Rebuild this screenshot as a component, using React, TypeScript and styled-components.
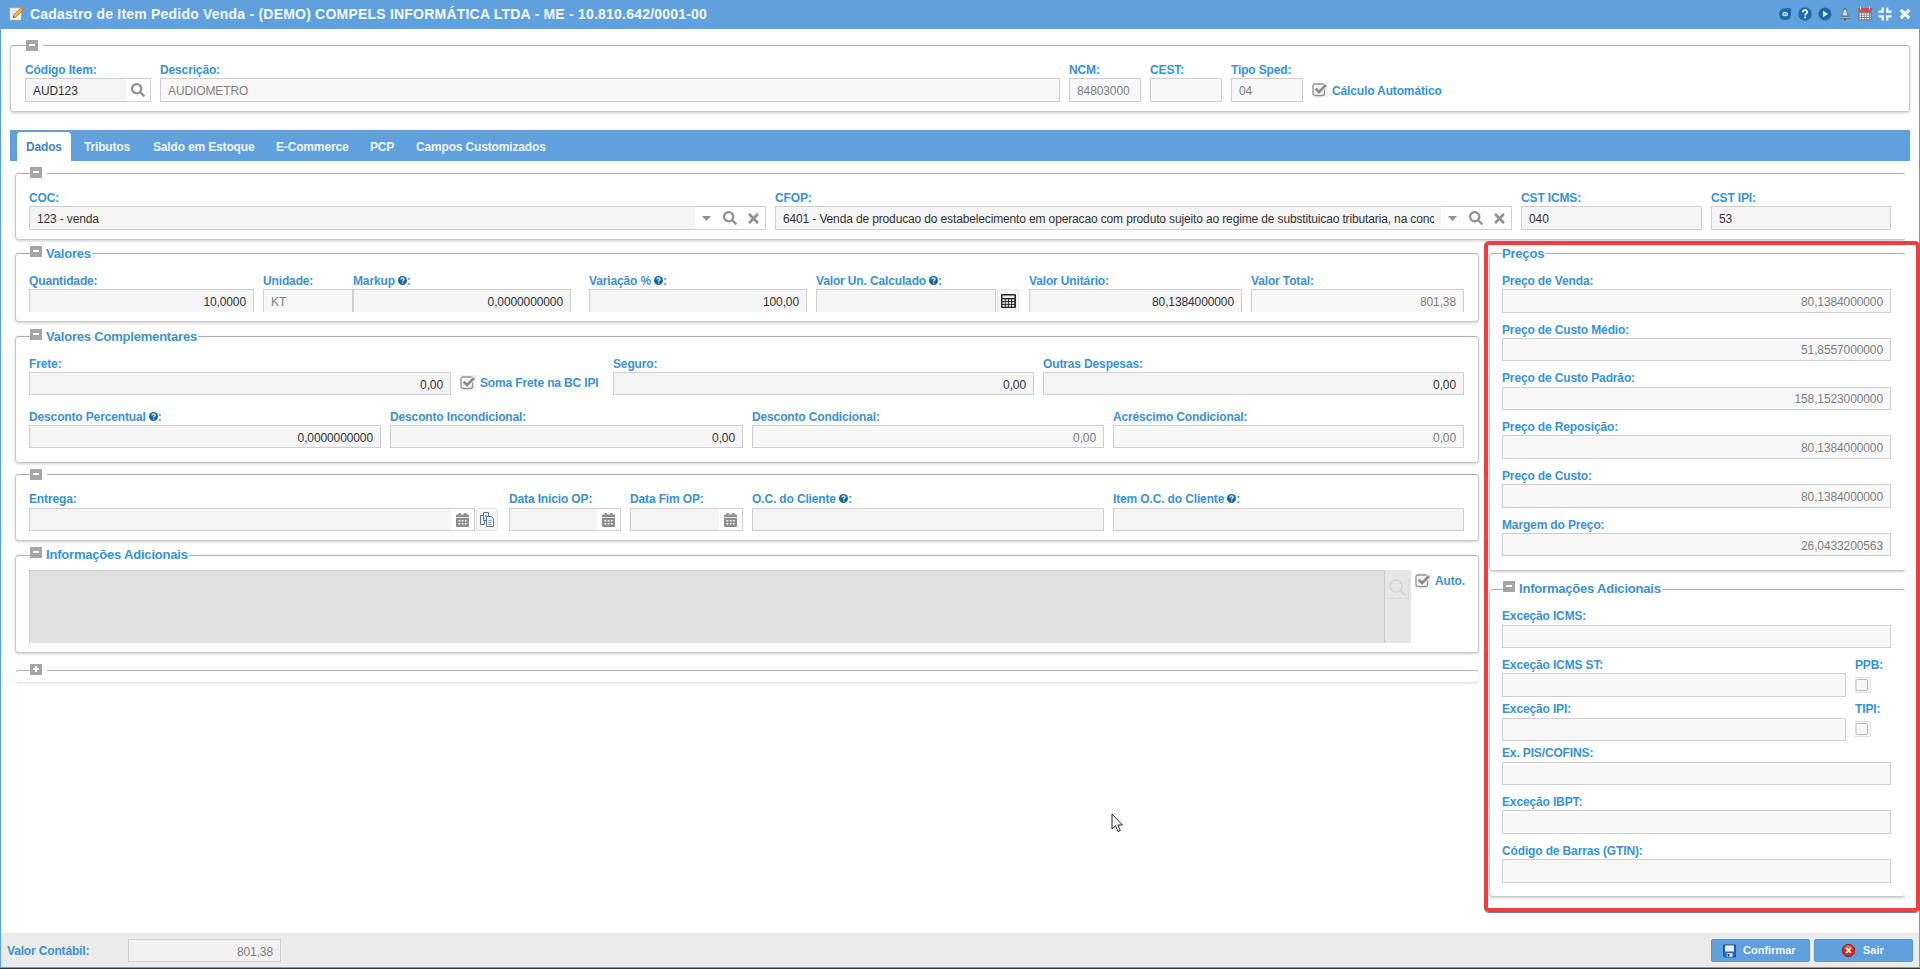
import React from "react";
import styled, { createGlobalStyle, css } from "styled-components";
import { FaSearch, FaTimes } from "react-icons/fa";

const blue = "#60a0dc";
const labelBlue = "#3892d4";

const Global = createGlobalStyle`
  * { box-sizing: border-box; }
  body {
    margin: 0;
    background: #fff;
    overflow: hidden;
    font: 12px/14px "Liberation Sans", Arial, sans-serif;
  }
  svg { display: block; flex: none; }
`;

const Window = styled.div`
  position: relative;
  display: flex;
  flex-direction: column;
  width: 1920px;
  height: 969px;
  border-bottom: 1px solid #2b3640;
`;

const Header = styled.header`
  display: flex;
  align-items: center;
  flex: none;
  height: 29px;
  padding: 0 7px 2px 9px;
  background: ${blue};
  color: #f4f8fc;
`;

const Title = styled.h1`
  flex: 1;
  margin: 0 0 0 6px;
  font-size: 14px;
  line-height: 16px;
  font-weight: bold;
  letter-spacing: 0.21px;
  white-space: nowrap;
`;

const Tools = styled.div`
  display: flex;
  align-items: center;
  gap: 4px;
`;

const Body = styled.main`
  flex: 1;
  min-height: 0;
  padding: 16px 9px 0;
  border: solid ${blue};
  border-width: 0 1px;
`;

type BoxProps = { $h: number; $mt?: number; $pt: number; $clip?: boolean; $pl?: number; $faded?: boolean };
const Box = styled.section<BoxProps>`
  position: relative;
  height: ${(p) => p.$h}px;
  margin-top: ${(p) => p.$mt ?? 0}px;
  padding: ${(p) => p.$pt}px 0 0 ${(p) => p.$pl ?? 13}px;
  border: 1px solid #c9c9c9;
  border-top-color: #b0b0b0;
  border-radius: 4px;
  box-shadow: 0 1px 3px rgba(0, 0, 0, 0.2);
  ${(p) =>
    p.$clip &&
    css`
      border-right-color: transparent;
      clip-path: inset(-12px 1px -6px -4px);
    `}
  ${(p) =>
    p.$faded &&
    css`
      border-color: #b0b0b0 transparent #e3e3e3;
      box-shadow: 0 1px 3px rgba(0, 0, 0, 0.1);
    `}
`;

const Legend = styled.div<{ $y: number; $x?: number }>`
  position: absolute;
  left: ${(p) => p.$x ?? 14}px;
  top: ${(p) => p.$y}px;
  display: flex;
  padding-right: 1px;
  background: #fff;
`;

const LegendText = styled.span<{ $bare?: boolean; $drop?: number }>`
  margin: ${(p) => p.$drop ?? 0}px 0 0 ${(p) => (p.$bare ? 0 : 4)}px;
  color: ${labelBlue};
  font-size: 13px;
  line-height: 15px;
  font-weight: bold;
  letter-spacing: -0.2px;
  white-space: nowrap;
`;

const ToggleBox = styled.span`
  display: block;
  width: 12px;
  height: 11px;
  background: #a6a6a6;
`;

const Row = styled.div<{ $mt?: number }>`
  display: flex;
  align-items: flex-start;
  margin-top: ${(p) => p.$mt ?? 0}px;
`;

const FieldSpacer = styled.span`
  flex: 1;
`;

const RowEnd = styled.span`
  flex: none;
  width: 14px;
`;

const FieldWrap = styled.div<{ $w: number; $ml: number }>`
  flex: none;
  width: ${(p) => p.$w}px;
  margin-left: ${(p) => p.$ml}px;
`;

const Label = styled.label<{ $gap?: number }>`
  display: flex;
  height: 14px;
  margin-bottom: ${(p) => p.$gap ?? 1}px;
  color: ${labelBlue};
  font-weight: bold;
  letter-spacing: -0.14px;
  white-space: nowrap;
`;

const Control = styled.div<{ $h: number; $disabled?: boolean; $cut?: boolean }>`
  display: flex;
  height: ${(p) => p.$h}px;
  background: ${(p) => (p.$disabled ? "#f8f8f8" : "#f5f5f5")};
  color: ${(p) => (p.$disabled ? "#7f7f7f" : "#333")};
  border: 1px solid #cfcfcf;
  ${(p) => p.$cut && "border-bottom: 0;"}
`;

const Value = styled.div<{ $right?: boolean; $up?: boolean; $tight?: boolean }>`
  flex: 1;
  min-width: 0;
  margin: ${(p) => (p.$up ? 4 : 5)}px 7px 0;
  height: 15px;
  overflow: hidden;
  letter-spacing: ${(p) => (p.$tight ? -0.14 : -0.11)}px;
  white-space: nowrap;
  text-align: ${(p) => (p.$right ? "right" : "left")};
`;

const Triggers = styled.div`
  display: flex;
  align-items: center;
  background: #fff;
  color: #929292;
`;

const Trigger = styled.span<{ $w?: number }>`
  display: flex;
  justify-content: center;
  width: ${(p) => p.$w ?? 24}px;
`;

const CheckRow = styled.div<{ $mt: number; $ml: number }>`
  display: flex;
  flex: none;
  margin: ${(p) => p.$mt}px 0 0 ${(p) => p.$ml}px;
`;

const CheckFrame = styled.span`
  display: block;
  width: 16px;
  height: 16px;
  background: #f3f3f3;
`;

const CheckLabel = styled.span<{ $drop?: number }>`
  margin: ${(p) => p.$drop ?? 1}px 0 0 4px;
  color: ${labelBlue};
  font-weight: bold;
  letter-spacing: -0.14px;
  white-space: nowrap;
`;

const TabBar = styled.nav`
  display: flex;
  align-items: flex-end;
  height: 31px;
  margin-top: 18px;
  padding-left: 7px;
  background: ${blue};
`;

const Tab = styled.span<{ $w: number; $active?: boolean }>`
  width: ${(p) => p.$w}px;
  height: 29px;
  margin-right: 4px;
  padding: 8px 0 0 9px;
  border-radius: 4px 4px 0 0;
  background: ${(p) => (p.$active ? "#fff" : "transparent")};
  color: ${(p) => (p.$active ? "#4584bd" : "#f0f6fc")};
  font-weight: bold;
  letter-spacing: -0.16px;
  white-space: nowrap;
`;

const Pane = styled.div`
  padding: 12px 4px 0 5px;
`;

const Columns = styled.div`
  display: flex;
  margin-top: 13px;
`;

const Left = styled.div`
  width: 1464px;
`;

const Right = styled.div`
  width: 417px;
  margin-left: 10px;
`;

const SideButton = styled.span<{ $cut?: boolean }>`
  display: flex;
  align-items: center;
  justify-content: center;
  width: 22px;
  height: 23px;
  margin: ${(p) => (p.$cut ? 15 : 16)}px 0 0 1px;
  background: #f7f7f7;
  border: 1px solid #e4e4e4;
  border-radius: 3px;
  ${(p) => p.$cut && "border-bottom: 0; border-radius: 3px 3px 0 0;"}
`;

const Notes = styled.div`
  width: 1356px;
  height: 73px;
  background: #e1e1e1;
  border: 1px solid #cbcbcb;
  border-bottom: 0;
`;

const NotesSide = styled.div`
  width: 26px;
  height: 73px;
  padding: 8px 0 0 3px;
  background: #e6e6e6;
`;

const NotesButton = styled.div`
  width: 21px;
  height: 21px;
  border: solid #dadada;
  border-width: 0 1px 1px 0;
`;

const Highlight = styled.div`
  position: absolute;
  left: 1484px;
  top: 241px;
  width: 436px;
  height: 671px;
  border: 4px solid #f23b3d;
  border-radius: 5px;
  box-shadow: 0 1px 1px rgba(60, 60, 60, 0.7);
`;

const Pointer = styled.svg`
  position: absolute;
  left: 1111px;
  top: 813px;
`;

const Footer = styled.footer`
  display: flex;
  flex: none;
  height: 35px;
  padding: 6px 6px 0;
  background: #ebebeb;
  border: 1px solid ${blue};
  border-top: 0;
`;

const FooterLabel = styled.span`
  width: 121px;
  margin-top: 5px;
  color: ${labelBlue};
  font-weight: bold;
  letter-spacing: -0.16px;
`;

const FooterValue = styled(Control)`
  width: 153px;
  margin-right: auto;
  background: #f1f1f1;
`;

const Button = styled.button<{ $pl: number; $gap: number }>`
  display: flex;
  align-items: center;
  width: 99px;
  height: 23px;
  margin-left: 4px;
  padding: 0 0 0 ${(p) => p.$pl}px;
  gap: ${(p) => p.$gap}px;
  background: ${blue};
  border: 1px solid #5596d2;
  border-radius: 2px;
  color: #f2f7fc;
  font: bold 11px/13px "Liberation Sans", Arial, sans-serif;
`;

const Toggle = ({ plus }: { plus?: boolean }) => (
  <ToggleBox>
    <svg width="12" height="11" viewBox="0 0 12 11">
      <rect x="3" y="4" width="6" height="2" fill="#fff" />
      {plus && <rect x="5" y="2" width="2" height="6" fill="#fff" />}
    </svg>
  </ToggleBox>
);

const HelpIcon = styled.svg`
  margin-left: 3px;
`;

const HelpDot = () => (
  <HelpIcon width="9" height="14" viewBox="0 0 9 14">
    <circle cx="4.5" cy="6.5" r="4.5" fill="#16659f" />
    <path d="M3 5.400C3 3.400 6.200 3.500 6.100 5.300C6 6.300 4.600 6.300 4.600 7.500M4.600 8.500v1.100" fill="none" stroke="#e8f3fb" strokeWidth="1.3" />
  </HelpIcon>
);

const CheckIcon = ({ on }: { on?: boolean }) => (
  <CheckFrame>
    <svg width="16" height="16" viewBox="0 0 16 16">
      {on ? (
        <>
          <rect x="1" y="2" width="11.5" height="11.5" rx="2" fill="#f8f8f8" stroke="#929292" strokeWidth="1.3" />
          <path d="M3.6 6.8L7 10.2L14 3" fill="none" stroke="#f8f8f8" strokeWidth="4.4" />
          <path d="M3.6 6.6L7 10L14 3" fill="none" stroke="#8c8c8c" strokeWidth="2.7" />
        </>
      ) : (
        <>
          <path d="M0 .5h15.5v15H0" fill="none" stroke="#e3e3e3" />
          <rect x="1" y="2.5" width="11.5" height="11" rx="1.5" fill="#f8f8f8" stroke="#bdbdbd" />
        </>
      )}
    </svg>
  </CheckFrame>
);

const Calendar = () => (
  <svg width="13" height="14" viewBox="0 0 13 14" fill="#8d8d8d">
    <path d="M2.5 0h2.3v1.5h3.400V0h2.300v1.500H12q1 0 1 1V4.300H0V2.500q0-1 1-1h1.500z" />
    <path fillRule="evenodd" d="M0 5h13v8q0 1-1 1H1q-1 0-1-1zM2.500 7v1.400h1.700V7zM5.700 7v1.400h1.700V7zM8.900 7v1.400h1.700V7zM2.500 10v1.500h1.700V10zM5.700 10v1.500h1.700V10zM8.900 10v1.500h1.700V10z" />
  </svg>
);

const GridCalc = () => (
  <svg width="15" height="14" viewBox="0 0 15 14">
    <rect x="0" y="0" width="15" height="14" rx="1" fill="#262626" />
    <rect x="1.5" y="1.5" width="12" height="2.5" fill="#e8e8e8" />
    <g fill="#f2f2f2">
      {[5.3, 8.1, 10.9].map((y) => [1.5, 4.7, 7.9, 11.1].map((x) => <rect key={x + "-" + y} x={x} y={y} width="2.2" height="1.8" />))}
    </g>
  </svg>
);

const PagesIcon = () => (
  <svg width="14" height="15" viewBox="0 0 14 15" fill="#e9f1f8" stroke="#5e788f" strokeWidth="1">
    <path d="M.5 3.5h4v9h-4z" />
    <path d="M3.5.5h5v8h-5z" />
    <path d="M6.5 4.5h5l2 2v8h-7z" />
    <path d="M5 3l2 2M5 5l2-2M8.5 8.5h3M8.5 10.5h3M8.5 12.5h3" stroke="#7fa8c9" />
  </svg>
);

const NoteIcon = () => (
  <svg width="15" height="15" viewBox="0 0 15 15">
    <rect x="1" y="2" width="11" height="12" fill="#f7f7f3" stroke="#c4c4bd" strokeWidth=".6" />
    <path d="M3 5h6M3 7.5h4M3 10h3" stroke="#c9cdd2" />
    <path d="M4 11.8L5 8.7L11.6 1.8L14 4L7.2 10.9z" fill="#f3b13c" stroke="#8a6a35" strokeWidth=".6" />
    <path d="M11.6 1.8l1-1L15 3l-1 1z" fill="#e37c6a" />
    <path d="M4 11.8l.5-1.5l1.2 1z" fill="#333" />
  </svg>
);

const ToolIcons = () => (
  <Tools>
    <svg width="16" height="16" viewBox="0 0 16 16">
      <path d="M4 3.400Q7 1.700 14 2.200V9Q13.600 14 8 14Q2.200 13.800 2.200 8.200Q2.200 5 4 3.400z" fill="#1b6aa8" />
      <rect x="5.300" y="6" width="5.600" height="4.200" rx="2" fill="#dcebf7" />
      <path d="M6.500 7.500h3.200M6.500 8.800h3.200" stroke="#1b6aa8" strokeWidth=".6" />
    </svg>
    <svg width="16" height="16" viewBox="0 0 16 16">
      <circle cx="8" cy="8" r="6.800" fill="#1b6eae" />
      <path d="M5.700 6.300C5.700 3.300 10.500 3.500 10.300 6.200C10.100 7.700 8.100 7.700 8.100 9.400M8.100 10.600v1.700" fill="none" stroke="#fff" strokeWidth="1.700" />
    </svg>
    <svg width="16" height="16" viewBox="0 0 16 16">
      <circle cx="8" cy="8" r="6.500" fill="#1b6aa8" />
      <path d="M6 4.800L11 8L6 11.200z" fill="#e6f1fa" />
    </svg>
    <svg width="16" height="16" viewBox="0 0 16 16">
      <path d="M6.500 2.500Q8 1 9.500 2.500L11.500 9.500L13.500 13h-11L4.500 9.500z" fill="#62758a" />
      <path d="M7 3.800h2L10.500 9.500h-5z" fill="#cfdbe6" />
      <rect x="3" y="11" width="10" height="1" fill="#9db2c6" />
      <rect x="7" y="13" width="2" height="1.400" fill="#425568" />
    </svg>
    <svg width="16" height="16" viewBox="0 0 16 16">
      <rect x="1" y="2" width="14" height="12.500" fill="#7b8188" />
      <rect x="1.500" y="2" width="13" height="3.800" fill="#cf4a4c" />
      <path d="M3.500 0.500v3M12.500 .5v3" stroke="#ddd" />
      <path d="M2.500 8h11M2.500 10.300h11M2.500 12.600h11" stroke="#f5f5f5" strokeWidth="1.400" strokeDasharray="1.700 .9" />
    </svg>
    <svg width="16" height="16" viewBox="0 0 16 16" fill="none" stroke="#f2f7fc" strokeWidth="2.200">
      <path d="M1.500 5.600h4.200V1.500M14.500 5.600h-4.200V1.500M1.500 10.400h4.200v4.100M14.500 10.400h-4.200v4.100" />
    </svg>
    <svg width="16" height="16" viewBox="0 0 16 16">
      <path d="M3.800 3.800l8.400 8.400M12.200 3.800l-8.400 8.400" stroke="#f2f7fc" strokeWidth="3.200" />
    </svg>
  </Tools>
);

const SaveIcon = () => (
  <svg width="13" height="14" viewBox="0 0 14 14">
    <path d="M.5.5h13v13H2L.5 12z" fill="#2a66c4" stroke="#1c4c9c" />
    <rect x="2.300" y="1" width="9.400" height="6.500" fill="#eef3f8" />
    <path d="M2.300 7.500h9.400" stroke="#9ab" />
    <rect x="4" y="9.300" width="6.200" height="4" fill="#dde5ee" />
    <rect x="5" y="10.300" width="1.800" height="2.500" fill="#222" />
  </svg>
);

const ExitIcon = () => (
  <svg width="13" height="13" viewBox="0 0 13 13">
    <path d="M4 .5h5L12.500 4v5L9 12.500H4L.5 9V4z" fill="#d42a1e" stroke="#8e1a14" strokeWidth=".8" />
    <path d="M2 4.500L4.500 1.500h4L11 4.500z" fill="#ef7d6b" opacity=".7" />
    <path d="M4.200 4.200l4.600 4.600M8.800 4.200L4.200 8.800" stroke="#fff" strokeWidth="1.800" />
  </svg>
);

type FieldProps = {
  label: string;
  w: number;
  ml?: number;
  h?: number;
  value?: string;
  right?: boolean;
  disabled?: boolean;
  cut?: boolean;
  help?: boolean;
  gap?: number;
  up?: boolean;
  trigger?: "search" | "date" | "combo";
};

const Field = ({ label, w, ml = 9, h = 23, value = "", right, disabled, cut, help, gap, up, trigger }: FieldProps) => (
  <FieldWrap $w={w} $ml={ml}>
    <Label $gap={gap}>
      {label}
      {help && <HelpDot />}:
    </Label>
    <Control $h={h} $disabled={disabled} $cut={cut}>
      <Value $right={right} $up={up} $tight={trigger === "combo"}>{value}</Value>
      {trigger && (
        <Triggers>
          {trigger === "combo" && (
            <>
              <Trigger $w={23}>
                <svg width="9" height="5" viewBox="0 0 9 5"><path d="M0 0h9L4.500 5z" fill="#929292" /></svg>
              </Trigger>
              <Trigger><FaSearch size={14} /></Trigger>
              <Trigger $w={23}><FaTimes size={15} /></Trigger>
            </>
          )}
          {trigger === "search" && <Trigger><FaSearch size={14} /></Trigger>}
          {trigger === "date" && <Trigger $w={23}><Calendar /></Trigger>}
        </Triggers>
      )}
    </Control>
  </FieldWrap>
);

const prices = [
  { label: "Preço de Venda", value: "80,1384000000", h: 24, mt: 0, gap: 1 },
  { label: "Preço de Custo Médio", value: "51,8557000000", h: 23, mt: 10, gap: 1, up: true },
  { label: "Preço de Custo Padrão", value: "158,1523000000", h: 23, mt: 10, gap: 2, up: true },
  { label: "Preço de Reposição", value: "80,1384000000", h: 24, mt: 10, gap: 1 },
  { label: "Preço de Custo", value: "80,1384000000", h: 24, mt: 10, gap: 1 },
  { label: "Margem do Preço", value: "26,0433200563", h: 23, mt: 10, gap: 1 },
];

const exceptions = [
  { label: "Exceção ICMS", h: 23, mt: 0, gap: 2 },
  { label: "Exceção ICMS ST", h: 24, mt: 10, gap: 1, flag: "PPB" },
  { label: "Exceção IPI", h: 23, mt: 5, gap: 2, flag: "TIPI" },
  { label: "Ex. PIS/COFINS", h: 23, mt: 5, gap: 2 },
  { label: "Exceção IBPT", h: 24, mt: 10, gap: 1 },
  { label: "Código de Barras (GTIN)", h: 24, mt: 10, gap: 1 },
];

export default function App() {
  return (
    <Window>
      <Global />
      <Header>
        <NoteIcon />
        <Title>Cadastro de Item Pedido Venda - (DEMO) COMPELS INFORMÁTICA LTDA - ME - 10.810.642/0001-00</Title>
        <ToolIcons />
      </Header>
      <Body>
        <Box $h={67} $pt={17} $pl={14}>
          <Legend $y={-6} $x={15}><Toggle /><LegendText> </LegendText></Legend>
          <Row>
            <Field ml={0} w={126} h={24} label="Código Item" value="AUD123" trigger="search" />
            <Field w={900} h={24} label="Descrição" value="AUDIOMETRO" disabled />
            <Field w={72} h={24} label="NCM" value="84803000" disabled />
            <Field w={72} h={24} label="CEST" disabled />
            <Field w={72} h={24} label="Tipo Sped" value="04" disabled />
            <CheckRow $mt={19} $ml={9}><CheckIcon on /><CheckLabel $drop={2}>Cálculo Automático</CheckLabel></CheckRow>
          </Row>
        </Box>
        <TabBar>
          <Tab $w={54} $active>Dados</Tab>
          <Tab $w={65}>Tributos</Tab>
          <Tab $w={119}>Saldo em Estoque</Tab>
          <Tab $w={90}>E-Commerce</Tab>
          <Tab $w={42}>PCP</Tab>
          <Tab $w={150}>Campos Customizados</Tab>
        </TabBar>
        <Pane>
          <Box $h={67} $pt={17} $clip>
            <Legend $y={-7}><Toggle /><LegendText> </LegendText></Legend>
            <Row>
              <Field ml={0} w={737} h={24} label="COC" value="123 - venda" trigger="combo" />
              <Field w={737} h={24} label="CFOP" value="6401 - Venda de producao do estabelecimento em operacao com produto sujeito ao regime de substituicao tributaria, na conc" trigger="combo" />
              <Field w={181} h={24} label="CST ICMS" value="040" />
              <Field w={180} h={24} label="CST IPI" value="53" />
            </Row>
          </Box>
          <Columns>
            <Left>
              <Box $h={69} $pt={20}>
                <Legend $y={-8}><Toggle /><LegendText>Valores</LegendText></Legend>
                <Row>
                  <Field ml={0} w={225} label="Quantidade" value="10,0000" right cut />
                  <Field w={90} label="Unidade" value="KT" disabled cut />
                  <Field ml={0} w={218} label="Markup" value="0,0000000000" right cut help />
                  <Field ml={18} w={218} label="Variação %" value="100,00" right cut help />
                  <Field w={180} label="Valor Un. Calculado" cut help />
                  <SideButton $cut><GridCalc /></SideButton>
                  <Field ml={10} w={213} label="Valor Unitário" value="80,1384000000" right cut />
                  <Field w={213} label="Valor Total" value="801,38" right disabled cut />
                </Row>
              </Box>
              <Box $h={127} $mt={14} $pt={20}>
                <Legend $y={-8}><Toggle /><LegendText>Valores Complementares</LegendText></Legend>
                <Row>
                  <Field ml={0} w={422} label="Frete" value="0,00" right />
                  <CheckRow $mt={18} $ml={9}><CheckIcon on /><CheckLabel>Soma Frete na BC IPI</CheckLabel></CheckRow>
                  <FieldSpacer />
                  <Field ml={0} w={421} label="Seguro" value="0,00" right />
                  <Field w={421} label="Outras Despesas" value="0,00" right />
                  <RowEnd />
                </Row>
                <Row $mt={15}>
                  <Field ml={0} w={352} label="Desconto Percentual" value="0,0000000000" right help />
                  <Field w={353} label="Desconto Incondicional" value="0,00" right />
                  <Field w={352} label="Desconto Condicional" value="0,00" right disabled />
                  <Field w={351} label="Acréscimo Condicional" value="0,00" right disabled />
                </Row>
              </Box>
              <Box $h={67} $mt={11} $pt={17}>
                <Legend $y={-6}><Toggle /><LegendText> </LegendText></Legend>
                <Row>
                  <Field ml={0} w={446} gap={2} label="Entrega" trigger="date" />
                  <SideButton><PagesIcon /></SideButton>
                  <Field ml={11} w={112} gap={2} label="Data Início OP" trigger="date" />
                  <Field w={113} gap={2} label="Data Fim OP" trigger="date" />
                  <Field w={352} gap={2} label="O.C. do Cliente" help />
                  <Field w={351} gap={2} label="Item O.C. do Cliente" help />
                </Row>
              </Box>
              <Box $h={98} $mt={14} $pt={14}>
                <Legend $y={-9}><Toggle /><LegendText>Informações Adicionais</LegendText></Legend>
                <Row>
                  <Notes />
                  <NotesSide>
                    <NotesButton>
                      <svg width="19" height="19" viewBox="0 0 19 19" fill="none" stroke="#d2d2d2" strokeWidth="1.600">
                        <circle cx="8" cy="8" r="6" />
                        <path d="M12.300 12.300l5.200 5" />
                      </svg>
                    </NotesButton>
                  </NotesSide>
                  <CheckRow $mt={3} $ml={4}><CheckIcon on /><CheckLabel>Auto.</CheckLabel></CheckRow>
                </Row>
              </Box>
              <Box $h={13} $mt={17} $pt={0} $faded>
                <Legend $y={-7}><Toggle plus /><LegendText> </LegendText></Legend>
              </Box>
            </Left>
            <Right>
              <Box $h={318} $pt={20} $pl={12} $clip>
                <Legend $y={-10} $x={12}><LegendText $bare $drop={2}>Preços</LegendText></Legend>
                {prices.map((p) => (
                  <Row key={p.label} $mt={p.mt}>
                    <Field ml={0} w={389} h={p.h} gap={p.gap} label={p.label} value={p.value} up={p.up} right disabled />
                  </Row>
                ))}
              </Box>
              <Box $h={308} $mt={18} $pt={19} $pl={12} $clip>
                <Legend $y={-9} $x={13}><Toggle /><LegendText>Informações Adicionais</LegendText></Legend>
                {exceptions.map((e) => (
                  <Row key={e.label} $mt={e.mt}>
                    <Field ml={0} w={e.flag ? 344 : 389} h={e.h} gap={e.gap} label={e.label} disabled />
                    {e.flag && (
                      <FieldWrap $w={30} $ml={9}>
                        <Label $gap={5}>{e.flag}:</Label>
                        <CheckIcon />
                      </FieldWrap>
                    )}
                  </Row>
                ))}
              </Box>
            </Right>
          </Columns>
        </Pane>
      </Body>
      <Footer>
        <FooterLabel>Valor Contábil:</FooterLabel>
        <FooterValue $h={23} $disabled><Value $right>801,38</Value></FooterValue>
        <Button $pl={11} $gap={7}><SaveIcon />Confirmar</Button>
        <Button $pl={27} $gap={8}><ExitIcon />Sair</Button>
      </Footer>
      <Highlight />
      <Pointer width="13" height="20" viewBox="0 0 13 20">
        <path d="M1 1v15l3.500-3.300L7 18.500l2.300-1L6.900 12H11.500z" fill="#fff" stroke="#222" />
      </Pointer>
    </Window>
  );
}
